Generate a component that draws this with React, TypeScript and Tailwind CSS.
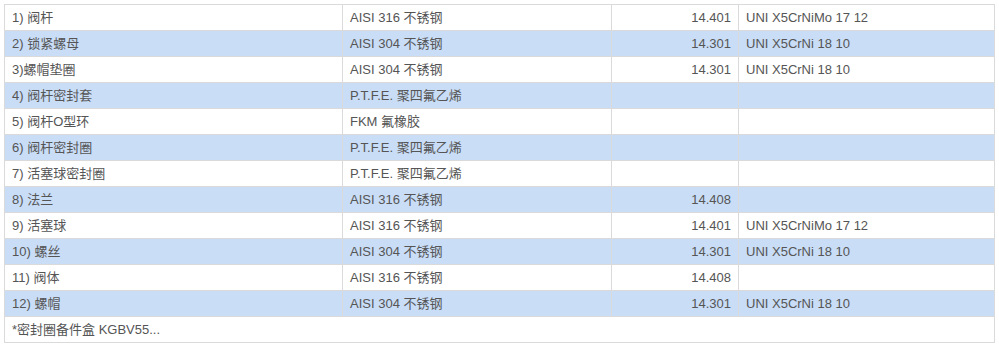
import React from 'react';

type Row = [string, string, string, string];

const rows: Row[] = [
  ['1) 阀杆', 'AISI 316 不锈钢', '14.401', 'UNI X5CrNiMo 17 12'],
  ['2) 锁紧螺母', 'AISI 304 不锈钢', '14.301', 'UNI X5CrNi 18 10'],
  ['3)螺帽垫圈', 'AISI 304 不锈钢', '14.301', 'UNI X5CrNi 18 10'],
  ['4) 阀杆密封套', 'P.T.F.E. 聚四氟乙烯', '', ''],
  ['5) 阀杆O型环', 'FKM 氟橡胶', '', ''],
  ['6) 阀杆密封圈', 'P.T.F.E. 聚四氟乙烯', '', ''],
  ['7) 活塞球密封圈', 'P.T.F.E. 聚四氟乙烯', '', ''],
  ['8) 法兰', 'AISI 316 不锈钢', '14.408', ''],
  ['9) 活塞球', 'AISI 316 不锈钢', '14.401', 'UNI X5CrNiMo 17 12'],
  ['10) 螺丝', 'AISI 304 不锈钢', '14.301', 'UNI X5CrNi 18 10'],
  ['11) 阀体', 'AISI 316 不锈钢', '14.408', ''],
  ['12) 螺帽', 'AISI 304 不锈钢', '14.301', 'UNI X5CrNi 18 10'],
];

const cell = 'border border-[#dadada] px-[7px] py-0 h-[25px] leading-[25px] whitespace-nowrap';

export default function App() {
  return (
    <div
      className="bg-white w-[999px] h-[347px] pt-[4px] pl-[4px] text-[13px] text-[#555]"
      style={{ fontFamily: '"Liberation Sans", Arial, "Noto Sans CJK SC", sans-serif' }}
    >
      <table className="w-[990px] table-fixed border-collapse">
        <colgroup>
          <col className="w-[338px]" />
          <col className="w-[269px]" />
          <col className="w-[127px]" />
          <col className="w-[256px]" />
        </colgroup>
        <tbody>
          {rows.map((r, i) => (
            <tr key={i} className={i % 2 === 1 ? 'bg-[#c9ddf7]' : 'bg-white'}>
              <td className={cell}>{r[0]}</td>
              <td className={cell}>{r[1]}</td>
              <td className={`${cell} text-right`}>{r[2]}</td>
              <td className={cell}>{r[3]}</td>
            </tr>
          ))}
          <tr className="bg-white">
            <td colSpan={4} className={cell}>*密封圈备件盒 KGBV55...</td>
          </tr>
        </tbody>
      </table>
    </div>
  );
}
